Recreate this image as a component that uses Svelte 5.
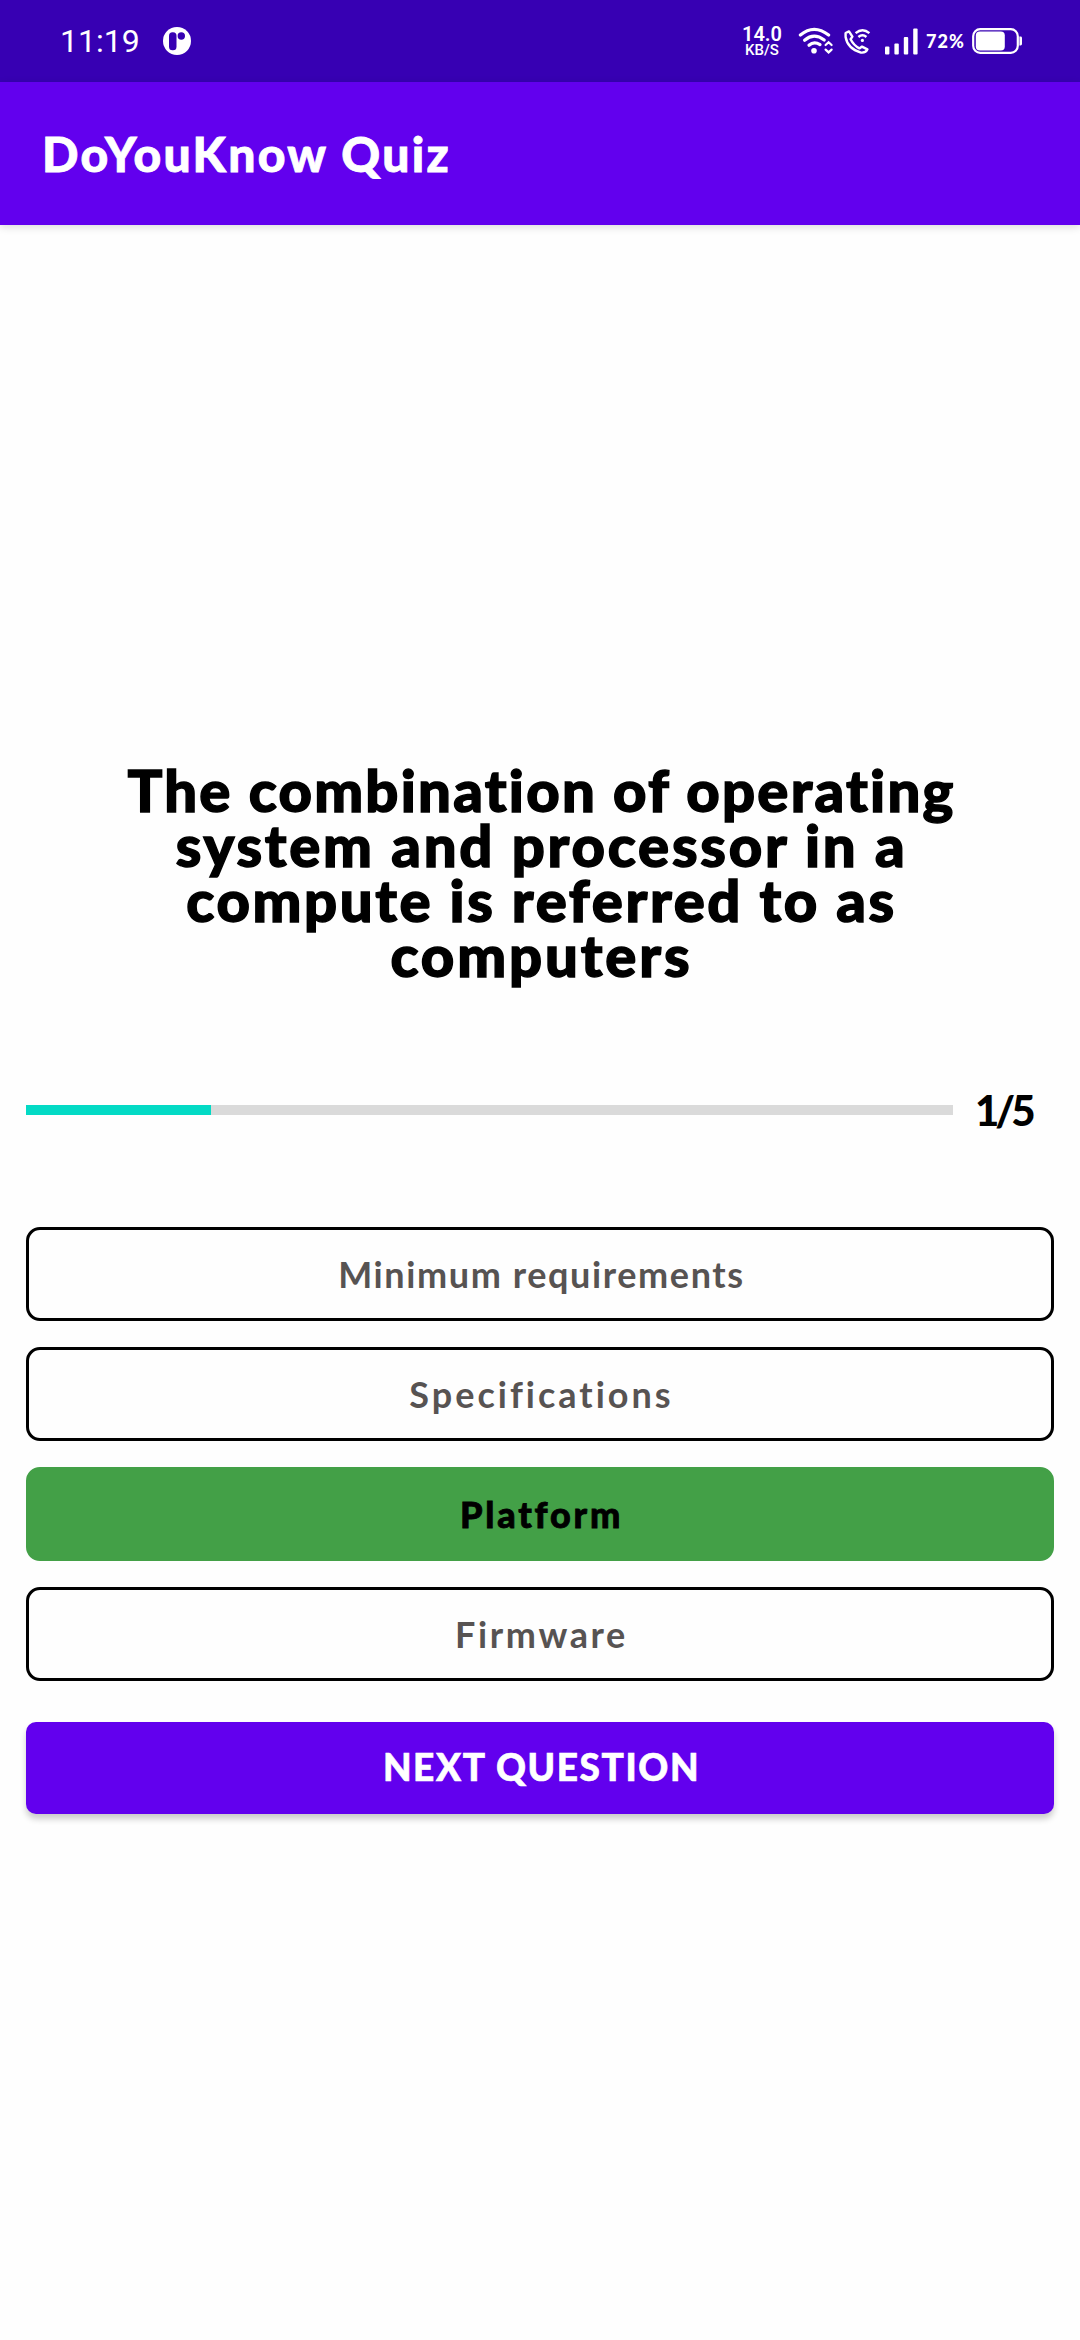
<script>
  const question = [
    { text: 'The combination of operating', cls: 'q1' },
    { text: 'system and processor in a', cls: 'q2' },
    { text: 'compute is referred to as', cls: 'q3' },
    { text: 'computers', cls: 'q4' }
  ];
  const options = [
    { text: 'Minimum requirements', cls: 'minimum' },
    { text: 'Specifications', cls: 'specs' },
    { text: 'Platform', cls: 'correct' },
    { text: 'Firmware', cls: 'firmware' }
  ];
  const current = 1;
  const total = 5;
</script>

<div class="screen">
  <div class="status">
    <div class="left">
      <span class="clock">11:19</span>
      <svg class="pico" width="28" height="28" viewBox="0 0 28 28">
        <circle cx="14" cy="14" r="14" fill="#fff" />
        <rect x="6" y="5.3" width="7.5" height="18" rx="3.5" fill="#3700b3" />
        <circle cx="18.3" cy="9" r="3.7" fill="#3700b3" />
      </svg>
    </div>
    <div class="right">
      <div class="speed"><b>14.0</b><small>KB/S</small></div>
      <svg class="wifi" width="36" height="28" viewBox="0 0 36 28" fill="none" stroke="#fff" stroke-width="3.2" stroke-linecap="round">
        <path d="M2.4 8Q16 -3.4 30.6 8" />
        <path d="M6.6 13.2Q16 5.2 26.2 13" />
        <path d="M11 18.2Q16 13.8 22 17.6" />
        <circle cx="16" cy="23.7" r="2.8" fill="#fff" stroke="none" />
        <path d="M27.6 18l3-2.8 3 2.8M27.6 22.6l3 2.8 3-2.8" stroke-width="2.2" />
      </svg>
      <svg class="call" width="27" height="26" viewBox="0 0 27 26" fill="none" stroke="#fff" stroke-width="2.4" stroke-linejoin="round">
        <path d="M1.6 5L5 3.4L8.4 8.6L6.6 11.2Q9.6 17.2 15.4 20.4L18 18.6L23.4 21.4Q22 25 17 24.6Q3.5 20.5 1.6 9Z" />
        <path d="M11.6 5.2Q18.5 -0.8 25.4 5.2M14.4 9Q18.5 5.4 22.4 9" />
        <circle cx="18.4" cy="12.4" r="1.6" fill="#fff" stroke="none" />
      </svg>
      <svg class="signal" width="33" height="27" viewBox="0 0 33 27" fill="#fff">
        <rect x="0" y="18.5" width="4.4" height="8" rx="1" />
        <rect x="9.4" y="15.5" width="4.4" height="11" rx="1" />
        <rect x="18.8" y="9" width="4.4" height="17.5" rx="1" />
        <rect x="28.2" y="0.5" width="4.4" height="26" rx="1" />
      </svg>
      <span class="percent">72%</span>
      <svg class="battery" width="50" height="26" viewBox="0 0 50 26">
        <rect x="1.2" y="1.2" width="44.6" height="23.6" rx="7" fill="none" stroke="#fff" stroke-width="2.2" />
        <rect x="3.8" y="3.5" width="29" height="19" rx="4" fill="#fff" />
        <path d="M47.4 8.5h1.2q1.4 0 1.4 1.5v6q0 1.5-1.4 1.5h-1.2z" fill="#fff" />
      </svg>
    </div>
  </div>

  <header><h1>DoYouKnow Quiz</h1></header>

  <main>
    <h2>
      {#each question as line}
        <span class={line.cls}>{line.text}</span>
      {/each}
    </h2>

    <div class="progress">
      <div class="track"><div class="fill" style:width="{(current / total) * 100}%"></div></div>
      <span class="count">{current}/{total}</span>
    </div>

    <div class="options">
      {#each options as option}
        <button class="option {option.cls}"><span>{option.text}</span></button>
      {/each}
    </div>

    <button class="next"><span>NEXT QUESTION</span></button>
  </main>
</div>

<style>
  :global(body) { margin: 0; background: #fefefe; }
  .screen { width: 1080px; height: 2340px; background: #fefefe; overflow: hidden; }
  svg { display: block; flex: none; }
  button { display: flex; align-items: center; justify-content: center; padding: 0; box-sizing: border-box; font-family: Lato, sans-serif; }
  span { white-space: nowrap; }

  .status { height: 82px; box-sizing: border-box; background: #3700b3; color: #fff; display: flex; justify-content: space-between; padding: 0 58px 0 60px; }
  .left, .right { display: flex; align-items: center; }
  .clock { font: 400 32px/82px Roboto, sans-serif; width: 103px; letter-spacing: 0; }
  .speed { display: flex; flex-direction: column; align-items: center; width: 40px; margin-right: 16px; font-family: Roboto, sans-serif; font-weight: 500; }
  .speed b { font-size: 20px; line-height: 18px; font-weight: 600; }
  .speed small { font-size: 15px; line-height: 15px; }
  .call { margin-left: 10px; }
  .signal { margin-left: 14px; }
  .percent { font: 900 18px/82px Lato, sans-serif; letter-spacing: 1px; width: 40px; margin: 0 6px 0 8px; }

  header { height: 143px; background: #6200ee; display: flex; align-items: center; padding-left: 42px; position: relative; box-shadow: 0 2px 8px rgba(0, 0, 0, 0.14); }
  h1 { margin: 0; color: #fff; font: 900 48px/60px Lato, sans-serif; letter-spacing: 2.3px; white-space: nowrap; -webkit-text-stroke: 0.8px #fff; }

  main { padding: 537px 26px 0; }
  h2 { margin: 0; height: 220px; padding-left: 3px; display: flex; flex-direction: column; align-items: center; color: #000; font: 900 58px/55px Lato, sans-serif; font-variant-ligatures: none; -webkit-text-stroke: 1.4px #000; }
  .q1 { letter-spacing: 2.25px; }
  .q2 { letter-spacing: 2.75px; }
  .q3 { letter-spacing: 2.6px; }
  .q4 { letter-spacing: 2.9px; }

  .progress { display: flex; align-items: center; height: 60px; margin-top: 98px; }
  .track { width: 927px; height: 10px; background: #dadada; }
  .fill { height: 10px; background: #03dac5; }
  .count { margin-left: 22px; font: 900 42px/60px Lato, sans-serif; letter-spacing: -4px; color: #000; }

  .options { display: flex; flex-direction: column; gap: 26px; margin-top: 87px; }
  .option { height: 94px; border: 3px solid #000; border-radius: 14px; background: #fefefe; color: #575352; font-size: 36px; font-weight: 700; letter-spacing: 1.6px; }
  .option span { margin: -1px 0 0 3px; }
  .option.specs { letter-spacing: 3px; }
  .option.firmware { letter-spacing: 2.6px; }
  .option.correct { border-color: #43a047; background: #43a047; color: #000; font-weight: 900; letter-spacing: 2.8px; -webkit-text-stroke: 0.8px #000; }
  .next { width: 100%; height: 92px; margin-top: 41px; border: 0; border-radius: 10px; background: #6200ee; color: #fff; font-size: 37px; font-weight: 900; letter-spacing: 1.6px; box-shadow: 0 5px 6px rgba(0, 0, 0, 0.2); -webkit-text-stroke: 0.6px #fff; }
  .next span { margin: -3px 0 0 3px; }
</style>
